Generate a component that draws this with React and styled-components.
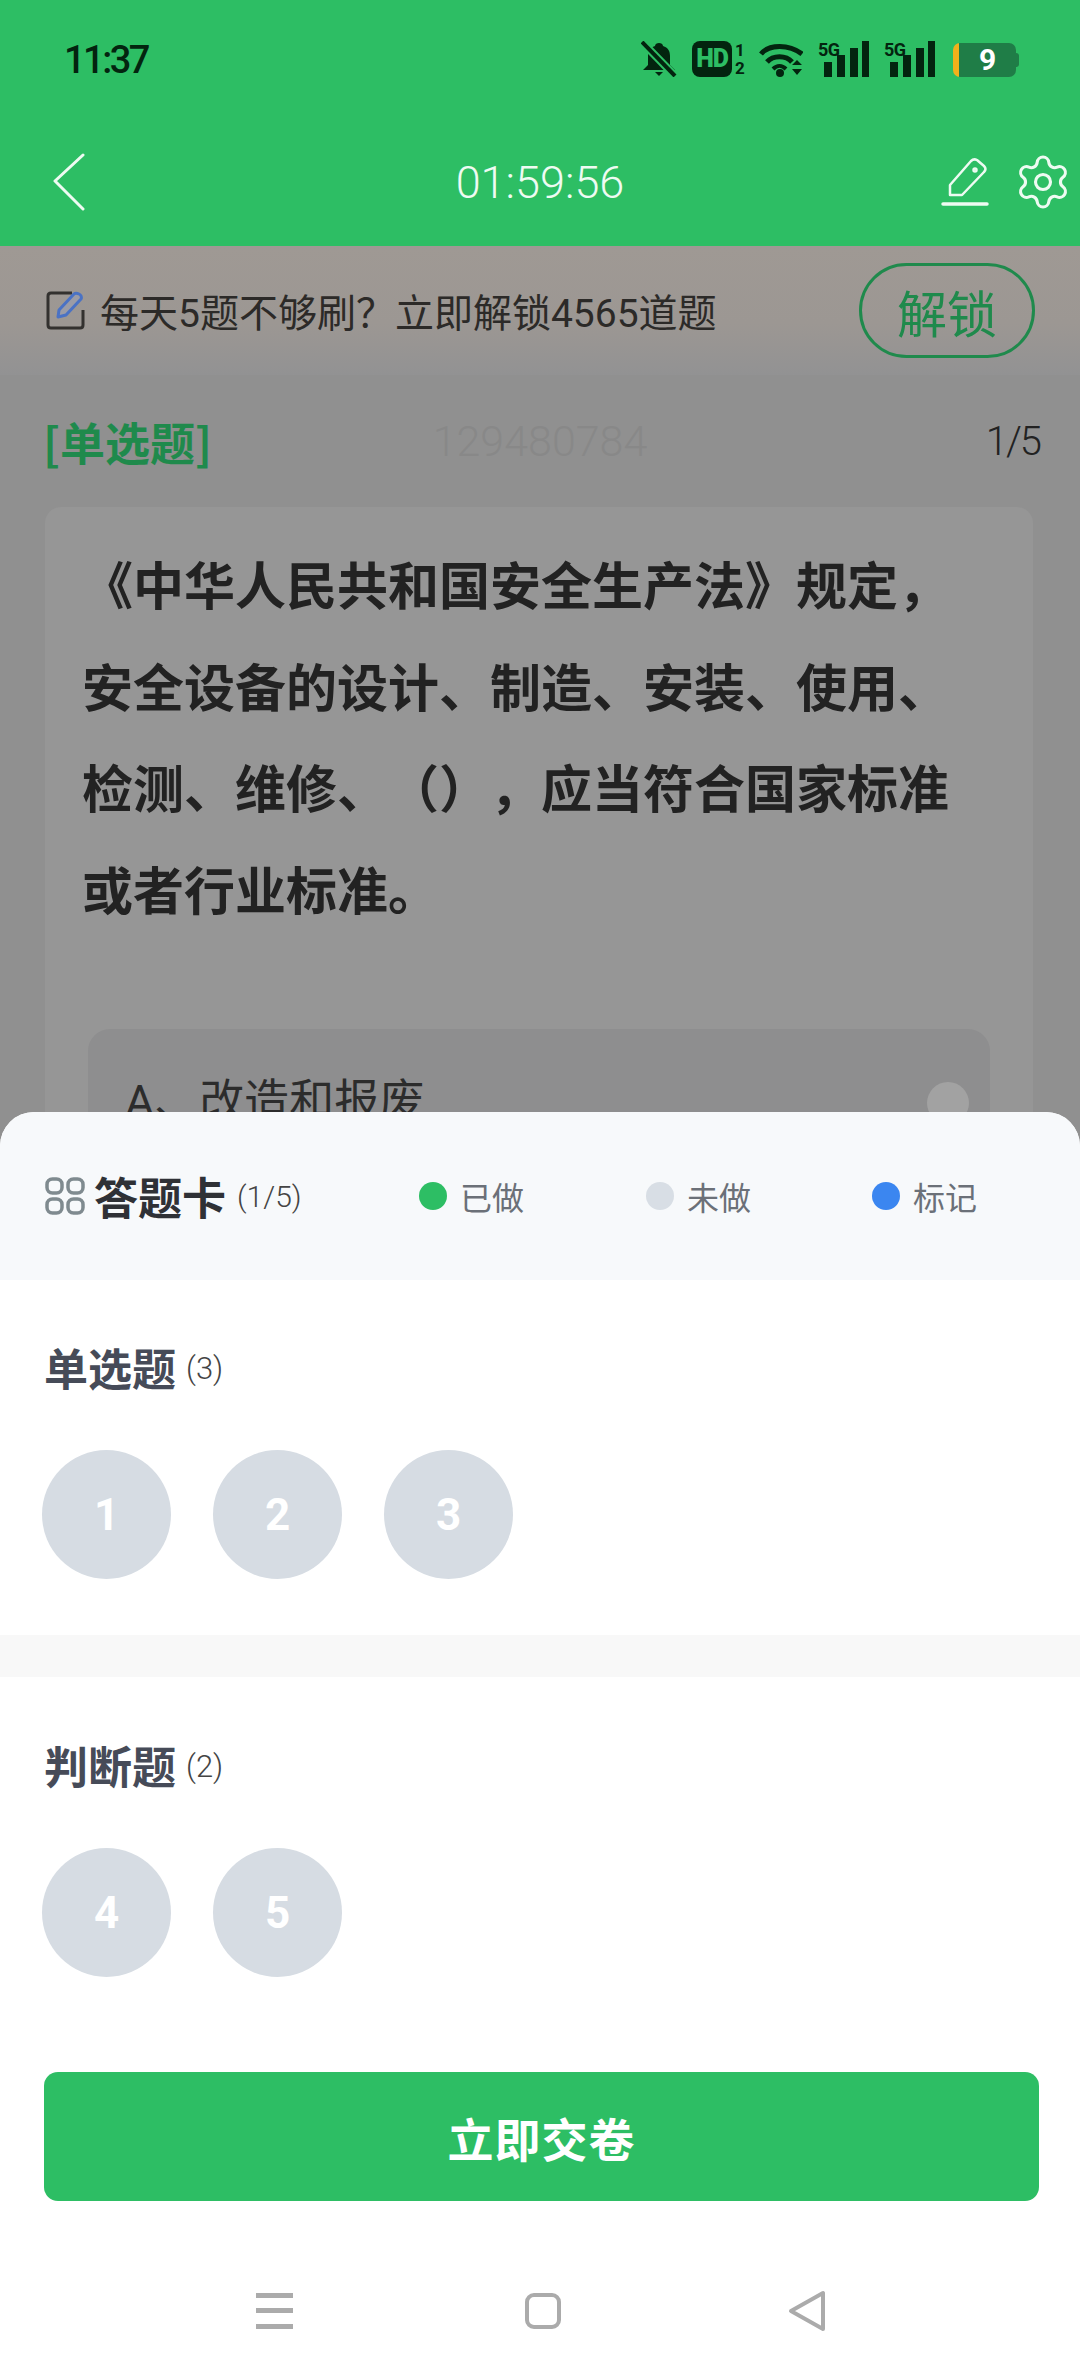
import React from 'react'
import styled, { createGlobalStyle } from 'styled-components'
import { Settings } from 'lucide-react'

const sections = [
  { title: '单选题', count: 3, items: [1, 2, 3] },
  { title: '判断题', count: 2, items: [4, 5] },
]

const legend = [
  { label: '已做', color: '#2dbe64', width: 227 },
  { label: '未做', color: '#d8dee5', width: 226 },
  { label: '标记', color: '#3b86f0', width: 'auto' },
]

function Signal() {
  return (
    <SignalWrap>
      <NetworkLabel>5G</NetworkLabel>
      <svg width="51" height="36" viewBox="0 0 51 36" fill="#03240f">
        <rect x="6" y="21" width="8" height="15" />
        <rect x="19" y="14" width="8" height="22" />
        <rect x="32" y="7" width="8" height="29" />
        <rect x="44" y="0" width="7" height="36" />
      </svg>
    </SignalWrap>
  )
}

function StatusIcons() {
  return (
    <StatusRight>
      <svg width="36" height="36" viewBox="0 0 36 36">
        <path d="M18 2c2 0 4 1 4 3 5 1.500 7 5 7 10v9l5 5H2l5-5v-9c0-5 2-8.500 7-10 0-2 2-3 4-3z" fill="#03240f" />
        <path d="M14 31h8l-4 4z" fill="#03240f" />
        <path d="M1 1l33 34" stroke="#2dbe64" strokeWidth="8" />
        <path d="M1 1l33 34" stroke="#03240f" strokeWidth="4" />
      </svg>
      <HdWrap>
        <HdBox>HD</HdBox>
        <HdSims>
          <span>1</span>
          <span>2</span>
        </HdSims>
      </HdWrap>
      <svg width="44" height="36" viewBox="0 0 44 36">
        <path d="M2 13C10 3 30 3 43 13" fill="none" stroke="#03240f" strokeWidth="5" />
        <path d="M8 21c6-7 19-7 25 0" fill="none" stroke="#03240f" strokeWidth="5" />
        <path d="M14 28c4-4 9-4 13 0" fill="none" stroke="#03240f" strokeWidth="4" />
        <circle cx="21" cy="32" r="4" fill="#03240f" />
        <path d="M33 24l5-5 5 5zM33 28h10l-5 6z" fill="#03240f" />
      </svg>
      <Signal />
      <Signal />
      <Battery>
        <BatteryLevel>9</BatteryLevel>
      </Battery>
    </StatusRight>
  )
}

function PenIcon() {
  return (
    <svg width="48" height="50" viewBox="0 0 48 50" fill="none" stroke="#eefbf2" strokeWidth="2.500" strokeLinejoin="round" strokeLinecap="round">
      <path d="M9 38V28L30 4c2-2 4-2 6-1l7 6c2 2 2 4 0 6L21 38z" />
      <circle cx="34" cy="13" r="1.500" />
      <path d="M2 47h44" strokeWidth="3.500" />
    </svg>
  )
}

function BannerIcon() {
  return (
    <svg width="40" height="40" viewBox="0 0 40 40" fill="none">
      <path d="M37 20v15c0 2-1 3-3 3H5c-2 0-3-1-3-3V6c0-2 1-3 3-3h21" stroke="#33312f" strokeWidth="3" />
      <path d="M12 27l1-7L28 4c1-1 3-1 5 0s3 3 2 5L20 25z" fill="#9b9ca6" stroke="#4a72c4" strokeWidth="3" strokeLinejoin="round" />
    </svg>
  )
}

function GridIcon() {
  return (
    <svg width="40" height="38" viewBox="0 0 40 38" fill="none" stroke="#7f8a8f" strokeWidth="3.500">
      <rect x="2" y="2" width="15" height="14" rx="5.500" />
      <rect x="23" y="2" width="15" height="14" rx="5.500" />
      <rect x="2" y="22" width="15" height="14" rx="5.500" />
      <rect x="23" y="22" width="15" height="14" rx="5.500" />
    </svg>
  )
}

export default function App() {
  return (
    <Page>
      <GlobalStyle />
      <Header>
        <StatusBar>
          <Clock>11:37</Clock>
          <StatusIcons />
        </StatusBar>
        <NavBar>
          <svg width="32" height="58" viewBox="0 0 32 58" fill="none" stroke="#eefbf2" strokeWidth="3" strokeLinecap="round" strokeLinejoin="round">
            <path d="M30 2L2 28l28 28" />
          </svg>
          <Timer>01:59:56</Timer>
          <NavActions>
            <PenIcon />
            <Settings size={60} color="#eefbf2" strokeWidth={1.250} />
          </NavActions>
        </NavBar>
      </Header>

      <Banner>
        <BannerText>
          <BannerIcon />
          每天5题不够刷？立即解锁4565道题
        </BannerText>
        <UnlockButton>解锁</UnlockButton>
      </Banner>

      <MetaRow>
        <TypeLabel>[单选题]</TypeLabel>
        <Watermark>129480784</Watermark>
        <Progress>1/5</Progress>
      </MetaRow>

      <QuestionCard>
        <QuestionText>
          《中华人民共和国安全生产法》规定，安全设备的设计、制造、安装、使用、检测、维修、（），应当符合国家标准或者行业标准。
        </QuestionText>
        <OptionRow>
          <span>A、改造和报废</span>
          <Radio />
        </OptionRow>
      </QuestionCard>

      <Sheet>
        <SheetHeader>
          <SheetTitle>
            <GridIcon />
            <strong>答题卡</strong>
            <small>(1/5)</small>
          </SheetTitle>
          <Legend>
            {legend.map((item) => (
              <LegendItem key={item.label} $width={item.width}>
                <Dot $color={item.color} />
                {item.label}
              </LegendItem>
            ))}
          </Legend>
        </SheetHeader>

        {sections.map((section, index) => (
          <Section key={section.title} $last={index === sections.length - 1}>
            <SectionTitle>
              {section.title}
              <small>({section.count})</small>
            </SectionTitle>
            <Circles>
              {section.items.map((n) => (
                <Circle key={n}>{n}</Circle>
              ))}
            </Circles>
          </Section>
        ))}

        <SubmitButton>立即交卷</SubmitButton>

        <SystemBar>
          <MenuGlyph width="37" height="36" viewBox="0 0 37 36" fill="#ababab">
            <rect y="0" width="37" height="5" />
            <rect y="15" width="37" height="5" />
            <rect y="31" width="37" height="5" />
          </MenuGlyph>
          <svg width="36" height="36" viewBox="0 0 36 36" fill="none" stroke="#ababab" strokeWidth="4">
            <rect x="2" y="2" width="32" height="32" rx="7" />
          </svg>
          <svg width="38" height="42" viewBox="0 0 38 42" fill="none" stroke="#ababab" strokeWidth="4" strokeLinejoin="round">
            <path d="M35 3v36L3 21z" />
          </svg>
        </SystemBar>
      </Sheet>
    </Page>
  )
}

const GlobalStyle = createGlobalStyle`
  html, body {
    margin: 0;
    padding: 0;
    background: #909090;
  }
  * {
    box-sizing: border-box;
    text-spacing-trim: space-all;
  }
`

const Page = styled.div`
  position: relative;
  width: 1080px;
  height: 2376px;
  overflow: hidden;
  background: #909090;
  font-family: Roboto, "Noto Sans CJK SC", sans-serif;
`

const Header = styled.header`
  height: 246px;
  background: #2dbe64;
`

const StatusBar = styled.div`
  height: 118px;
  padding: 41px 64px 0;
  display: flex;
  justify-content: space-between;
  align-items: flex-start;
`

const Clock = styled.div`
  font-size: 38px;
  font-weight: 500;
  line-height: 38px;
  letter-spacing: -2.500px;
  color: #03240f;
`

const StatusRight = styled.div`
  display: flex;
  align-items: flex-start;
  gap: 15px;
`

const SignalWrap = styled.div`
  position: relative;
  width: 51px;
  height: 36px;
`

const NetworkLabel = styled.span`
  position: absolute;
  left: 0;
  top: 0;
  font-size: 18px;
  font-weight: 700;
  line-height: 18px;
  letter-spacing: -0.500px;
  color: #03240f;
`

const HdWrap = styled.div`
  display: flex;
  gap: 3px;
`

const HdBox = styled.div`
  width: 40px;
  height: 36px;
  border-radius: 8px;
  background: #03240f;
  color: #2dbe64;
  font-size: 25px;
  font-weight: 900;
  line-height: 36px;
  letter-spacing: -1px;
  text-align: center;
`

const HdSims = styled.div`
  display: flex;
  flex-direction: column;
  width: 9px;
  font-size: 17px;
  font-weight: 700;
  line-height: 18px;
  color: #03240f;
`

const Battery = styled.div`
  position: relative;
  margin: 2px 0 0 3px;
  width: 63px;
  height: 34px;
  padding-left: 6px;
  border-radius: 7px;
  background: linear-gradient(to right, #f2b11b 6px, #1f7d47 6px);
  &::after {
    content: '';
    position: absolute;
    right: -3px;
    top: 10px;
    width: 3px;
    height: 14px;
    border-radius: 0 3px 3px 0;
    background: #1f7d47;
  }
`

const BatteryLevel = styled.div`
  text-align: center;
  font-size: 30px;
  font-weight: 700;
  line-height: 34px;
  color: #fff;
`

const NavBar = styled.div`
  position: relative;
  height: 128px;
  padding: 0 7px 0 53px;
  display: flex;
  align-items: center;
  justify-content: space-between;
`

const Timer = styled.div`
  position: absolute;
  left: 0;
  right: 0;
  text-align: center;
  font-size: 45px;
  font-weight: 300;
  color: #eefbf2;
`

const NavActions = styled.div`
  display: flex;
  align-items: center;
  gap: 24px;
`

const Banner = styled.div`
  height: 129px;
  padding: 0 45px 0 46px;
  display: flex;
  align-items: center;
  justify-content: space-between;
  background: linear-gradient(to bottom, #9f9994 0%, #9c9793 60%, #929293 100%);
`

const BannerText = styled.div`
  display: flex;
  align-items: center;
  gap: 14px;
  margin-top: -2px;
  font-size: 39px;
  color: #2c2a28;
`

const UnlockButton = styled.div`
  width: 176px;
  height: 95px;
  border: 3px solid #1f8a4c;
  border-radius: 48px;
  display: flex;
  align-items: center;
  justify-content: center;
  font-size: 50px;
  color: #1f8a4c;
`

const MetaRow = styled.div`
  position: relative;
  height: 132px;
  padding: 0 40px 0 43px;
  display: flex;
  align-items: center;
  justify-content: space-between;
`

const TypeLabel = styled.div`
  font-family: "Noto Sans CJK SC", sans-serif;
  font-size: 45px;
  font-weight: 700;
  color: #1f8a4c;
`

const Watermark = styled.div`
  position: absolute;
  left: 0;
  right: 0;
  text-align: center;
  font-size: 43px;
  font-weight: 300;
  color: #888888;
`

const Progress = styled.div`
  font-size: 40px;
  font-weight: 300;
  letter-spacing: -2px;
  color: #222;
`

const QuestionCard = styled.section`
  margin: 0 47px 0 45px;
  height: 800px;
  padding: 30px 38px 0 37px;
  border-radius: 16px;
  background: #969696;
`

const QuestionText = styled.div`
  font-size: 51px;
  font-weight: 700;
  line-height: 101.500px;
  color: #222;
`

const OptionRow = styled.div`
  margin: 86px 5px 0 6px;
  height: 200px;
  padding: 41px 21px 0 37px;
  border-radius: 22px;
  background: #8e8e8f;
  display: flex;
  justify-content: space-between;
  align-items: flex-start;
  font-size: 45px;
  line-height: 64px;
  color: #2c2c2c;
`

const Radio = styled.div`
  width: 42px;
  height: 42px;
  margin-top: 12px;
  border-radius: 50%;
  background: #a2a2a2;
`

const Sheet = styled.div`
  position: absolute;
  left: 0;
  right: 0;
  top: 1112px;
  bottom: 0;
  background: #fff;
  border-radius: 34px 34px 0 0;
  overflow: hidden;
`

const SheetHeader = styled.div`
  height: 168px;
  padding: 0 0 0 45px;
  background: #f7f9fb;
  display: flex;
  align-items: center;
`

const SheetTitle = styled.div`
  width: 374px;
  display: flex;
  align-items: center;
  gap: 9px;
  color: #2f3136;
  strong {
    font-size: 44px;
    font-weight: 700;
  }
  small {
    margin-left: 2px;
    font-size: 30px;
    font-weight: 300;
    color: #444;
  }
`

const Legend = styled.div`
  display: flex;
`

const LegendItem = styled.div`
  width: ${(p) => (p.$width === 'auto' ? 'auto' : `${p.$width}px`)};
  display: flex;
  align-items: center;
  gap: 13px;
  font-size: 32px;
  color: #6b7078;
`

const Dot = styled.span`
  width: 28px;
  height: 28px;
  border-radius: 50%;
  background: ${(p) => p.$color};
`

const Section = styled.div`
  height: ${(p) => (p.$last ? '395px' : '397px')};
  padding: ${(p) => (p.$last ? '58px' : '57px')} 0 0 42px;
  border-bottom: ${(p) => (p.$last ? 'none' : '42px solid #f8f8f8')};
`

const SectionTitle = styled.div`
  padding-left: 2px;
  display: flex;
  align-items: center;
  gap: 10px;
  height: 60px;
  font-size: 44px;
  font-weight: 700;
  color: #464b58;
  small {
    margin-top: 2px;
    font-size: 31px;
    font-weight: 300;
    color: #444;
  }
`

const Circles = styled.div`
  margin-top: 53px;
  display: flex;
  gap: 42px;
`

const Circle = styled.div`
  width: 129px;
  height: 129px;
  border-radius: 50%;
  background: #d6dce3;
  display: flex;
  align-items: center;
  justify-content: center;
  font-size: 44px;
  font-weight: 700;
  color: #fff;
`

const SubmitButton = styled.div`
  margin: 0 41px 0 44px;
  height: 129px;
  border-radius: 14px;
  background: #2dbe64;
  display: flex;
  align-items: center;
  justify-content: center;
  font-size: 46px;
  font-weight: 700;
  color: #fff;
  letter-spacing: 1px;
`

const SystemBar = styled.div`
  margin-top: 89px;
  padding: 0 0 0 256px;
  display: flex;
  align-items: center;
  gap: 227px;
`

const MenuGlyph = styled.svg`
  margin-right: 5px;
`
